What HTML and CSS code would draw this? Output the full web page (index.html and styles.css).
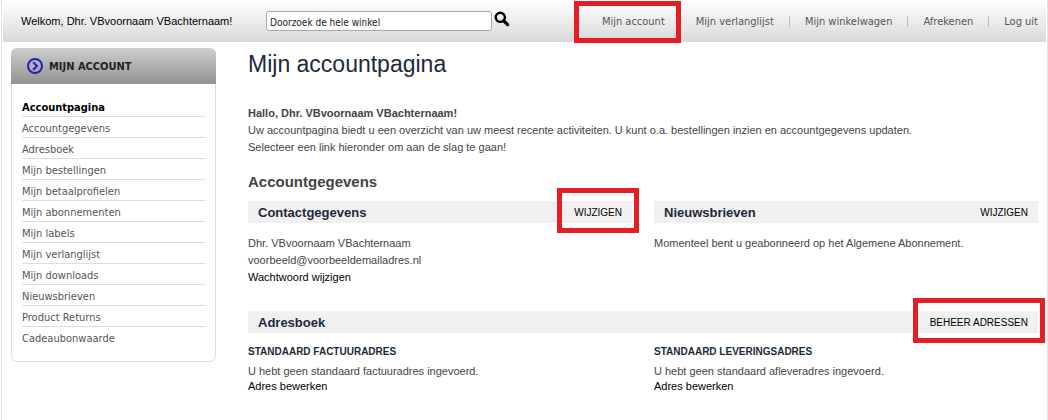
FILE: index.html
```html
<!DOCTYPE html>
<html lang="nl">
<head>
    <meta charset="UTF-8">
    <title>Mijn accountpagina</title>
    <link rel="stylesheet" href="styles.css">
</head>
<body>
    <div class="page">
        <header class="header">
            <p class="welcome">Welkom, Dhr. VBvoornaam VBachternaam!</p>
            <form class="search">
                <input type="text" class="search-input" value="Doorzoek de hele winkel" aria-label="Doorzoek de hele winkel">
                <button type="submit" class="search-btn" aria-label="Zoeken">
                    <svg width="16" height="16" viewBox="0 0 16 16">
                        <circle cx="6.3" cy="6.3" r="4.6" fill="none" stroke="#000" stroke-width="2.4"/>
                        <path d="M9.8 9.8L13.6 13.6" stroke="#000" stroke-width="3.2" stroke-linecap="round"/>
                    </svg>
                </button>
            </form>
            <nav class="top-links">
                <ul>
                    <li><a href="#" class="highlight highlight-nav">Mijn account</a></li>
                    <li><a href="#">Mijn verlanglijst</a></li>
                    <li><a href="#">Mijn winkelwagen</a></li>
                    <li><a href="#">Afrekenen</a></li>
                    <li><a href="#">Log uit</a></li>
                </ul>
            </nav>
        </header>

        <div class="content">
            <aside class="sidebar">
                <h2 class="sidebar-title">
                    <svg width="16" height="16" viewBox="0 0 16 16" fill="none" stroke="#2420b8">
                        <circle cx="8" cy="8" r="7" stroke-width="2"/>
                        <path d="M6.2 4.2L10 8L6.2 11.8" stroke-width="2"/>
                    </svg>
                    MIJN ACCOUNT
                </h2>
                <ul class="sidebar-menu">
                    <li class="current">Accountpagina</li>
                    <li><a href="#">Accountgegevens</a></li>
                    <li><a href="#">Adresboek</a></li>
                    <li><a href="#">Mijn bestellingen</a></li>
                    <li><a href="#">Mijn betaalprofielen</a></li>
                    <li><a href="#">Mijn abonnementen</a></li>
                    <li><a href="#">Mijn labels</a></li>
                    <li><a href="#">Mijn verlanglijst</a></li>
                    <li><a href="#">Mijn downloads</a></li>
                    <li><a href="#">Nieuwsbrieven</a></li>
                    <li><a href="#">Product Returns</a></li>
                    <li><a href="#">Cadeaubonwaarde</a></li>
                </ul>
            </aside>

            <main class="main">
                <h1>Mijn accountpagina</h1>
                <div class="intro">
                    <p><strong>Hallo, Dhr. VBvoornaam VBachternaam!</strong></p>
                    <p>Uw accountpagina biedt u een overzicht van uw meest recente activiteiten. U kunt o.a. bestellingen inzien en accountgegevens updaten.</p>
                    <p>Selecteer een link hieronder om aan de slag te gaan!</p>
                </div>

                <h2 class="section-title">Accountgegevens</h2>
                <div class="columns info">
                    <section>
                        <div class="bar">
                            <h3>Contactgegevens</h3>
                            <a href="#" class="highlight highlight-bar">WIJZIGEN</a>
                        </div>
                        <p>Dhr. VBvoornaam VBachternaam</p>
                        <p>voorbeeld@voorbeeldemailadres.nl</p>
                        <p><a href="#">Wachtwoord wijzigen</a></p>
                    </section>
                    <section>
                        <div class="bar">
                            <h3>Nieuwsbrieven</h3>
                            <a href="#">WIJZIGEN</a>
                        </div>
                        <p>Momenteel bent u geabonneerd op het Algemene Abonnement.</p>
                    </section>
                </div>

                <div class="bar">
                    <h3>Adresboek</h3>
                    <a href="#" class="highlight highlight-bar">BEHEER ADRESSEN</a>
                </div>
                <div class="columns addresses">
                    <section>
                        <h4>STANDAARD FACTUURADRES</h4>
                        <p>U hebt geen standaard factuuradres ingevoerd.</p>
                        <p><a href="#">Adres bewerken</a></p>
                    </section>
                    <section>
                        <h4>STANDAARD LEVERINGSADRES</h4>
                        <p>U hebt geen standaard afleveradres ingevoerd.</p>
                        <p><a href="#">Adres bewerken</a></p>
                    </section>
                </div>
            </main>
        </div>
    </div>
</body>
</html>
```
FILE: styles.css
```css
* {
    box-sizing: border-box;
}

body {
    margin: 0;
    background-color: #fff;
    color: #444;
    font: 11px/17px "Liberation Sans", Arial, sans-serif;
}

h1, h2, h3, h4, p, ul {
    margin: 0;
    padding: 0;
}

ul {
    list-style: none;
}

a {
    color: #000;
    text-decoration: none;
}

.page {
    min-height: 100vh;
    margin-left: 1px;
    border-left: 1px solid #e4e4e4;
    border-right: 1px solid #e4e4e4;
    padding: 0 1px;
}

/* Header */
.header {
    display: flex;
    align-items: center;
    height: 42px;
    padding: 0 8px 0 18px;
    background: linear-gradient(#fff, #d9d9d9);
}

.welcome {
    width: 245px;
    color: #000;
}

.search {
    display: flex;
    align-items: center;
    gap: 2px;
}

.search-input {
    width: 226px;
    height: 20px;
    padding: 2px 3px 0;
    border: 1px solid #aaa;
    border-radius: 3px;
    background-color: #fff;
    color: #222;
    font: 10px "DejaVu Sans Condensed", Verdana, sans-serif;
}

.search-btn {
    display: flex;
    padding: 0 0 4px;
    border: none;
    background: none;
    cursor: pointer;
}

.top-links {
    margin-left: auto;
}

.top-links ul {
    display: flex;
}

.top-links li {
    display: flex;
    align-items: center;
    font: 11px/17px "DejaVu Sans Condensed", Tahoma, sans-serif;
}

.top-links li + li::before {
    content: "";
    width: 1px;
    height: 11px;
    margin: 0 15px;
    background-color: #bbb;
}

.top-links a {
    color: #555;
}

/* Red frames round the links to click */
.highlight {
    position: relative;
}

.highlight::after {
    content: "";
    position: absolute;
    border: 5px solid #e51e25;
    pointer-events: none;
}

.highlight-nav::after {
    inset: -12px -16px -13px -28px;
}

.highlight-bar::after {
    inset: -16px -17px -12px;
}

/* Sidebar */
.content {
    display: flex;
    align-items: flex-start;
    gap: 32px;
    padding: 6px 8px;
}

.sidebar {
    flex: 0 0 205px;
    border: 1px solid #ddd;
    border-top: none;
    border-radius: 6px;
    font-family: "DejaVu Sans Condensed", Tahoma, sans-serif;
}

.sidebar-title {
    display: flex;
    align-items: center;
    gap: 6px;
    height: 36px;
    margin: 0 -1px;
    padding: 0 16px;
    border-radius: 6px 6px 0 0;
    background: linear-gradient(#cecece, #929292);
    color: #222;
    font-size: 11px;
}

.sidebar-menu {
    padding: 12px 10px 14px;
}

.sidebar-menu li {
    padding-top: 3px;
    border-bottom: 1px solid #ddd;
    line-height: 17px;
}

.sidebar-menu li:last-child {
    border-bottom: none;
}

.sidebar-menu a {
    color: #555;
}

.sidebar-menu .current {
    color: #000;
    font-weight: bold;
}

/* Main column */
.main {
    flex: 1;
}

h1 {
    color: #1b2a3a;
    font-size: 23px;
    font-weight: normal;
    line-height: 32px;
}

.intro {
    margin: 25px 0 17px;
}

.section-title {
    margin-bottom: 10px;
    font-size: 15px;
    line-height: 18px;
}

.columns {
    display: grid;
    grid-template-columns: 1fr 1fr;
    gap: 22px;
}

.bar {
    display: flex;
    align-items: center;
    justify-content: space-between;
    height: 22px;
    padding: 0 10px;
    background-color: #f0f0f0;
}

.bar h3 {
    color: #1b2a3a;
    font-size: 13px;
}

.bar a {
    font-size: 10px;
}

.info {
    margin-bottom: 25px;
}

.info .bar {
    margin-bottom: 12px;
}

.addresses {
    margin-top: 10px;
    line-height: 15px;
}

h4 {
    margin-bottom: 4px;
    color: #1b2a3a;
    font-size: 10px;
    line-height: 17px;
}
```
